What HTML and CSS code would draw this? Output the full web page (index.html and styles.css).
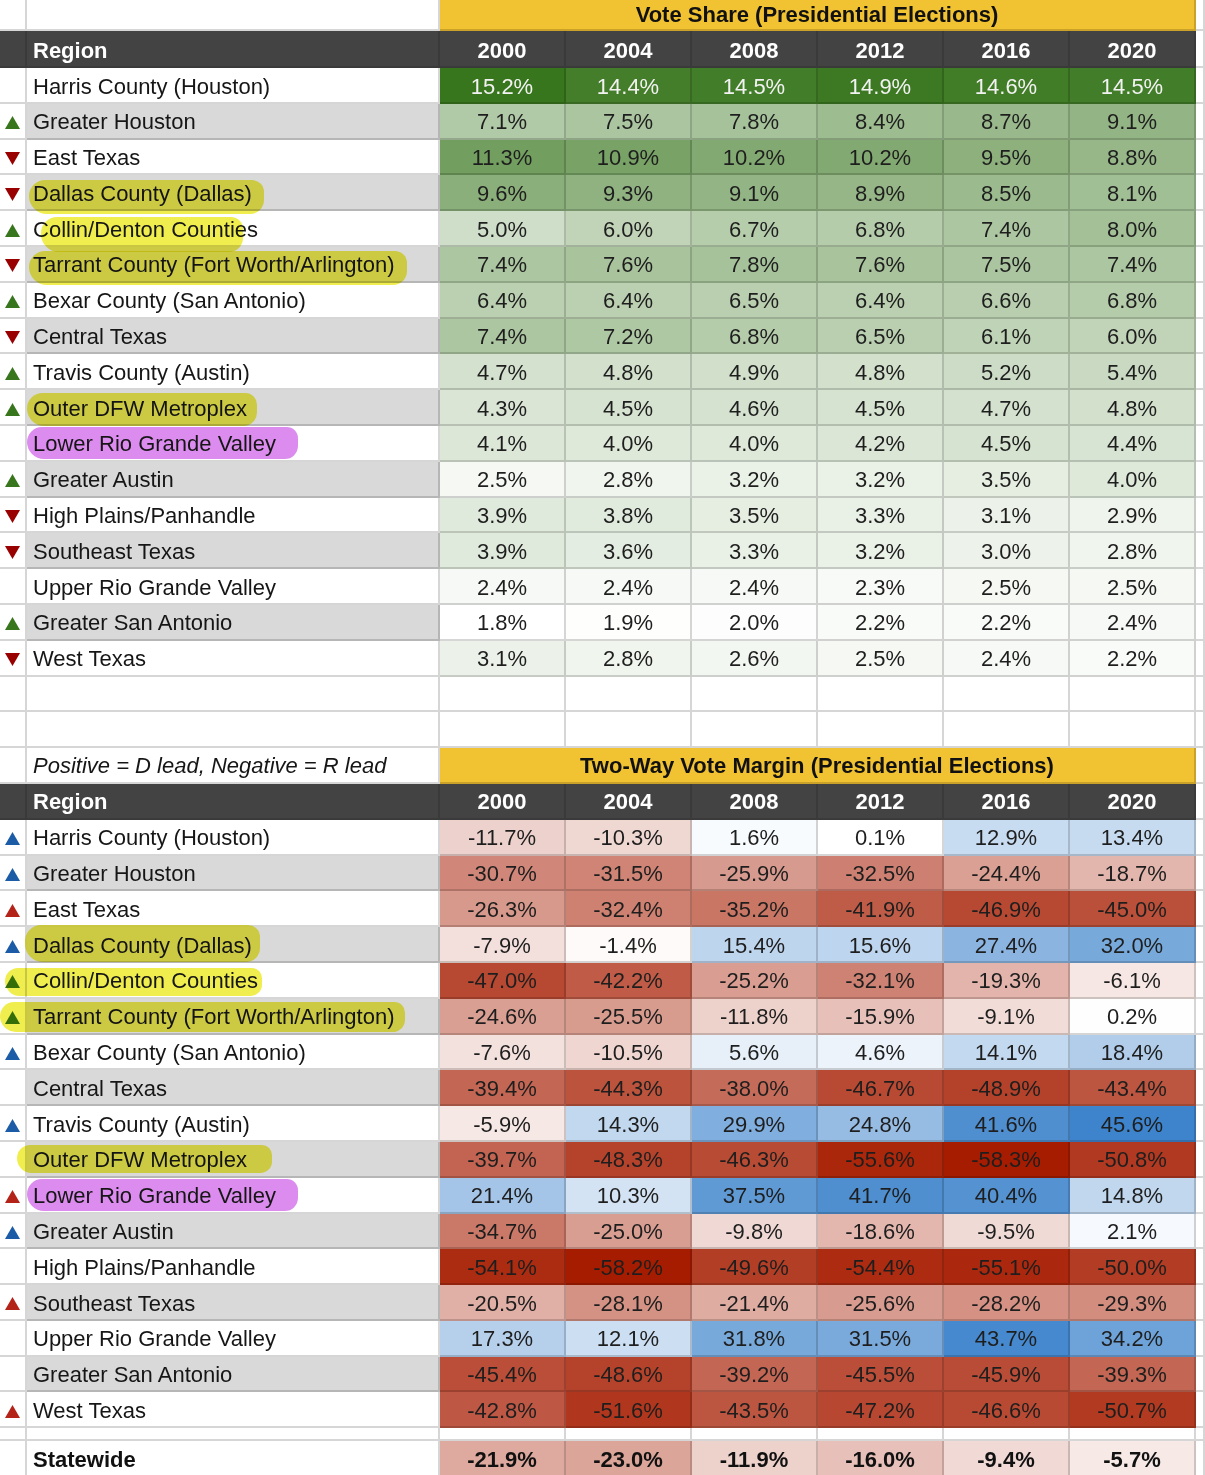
FILE: index.html
```html
<!DOCTYPE html>
<html lang="en">
<head>
<meta charset="utf-8">
<title>Texas Regions</title>
<link rel="stylesheet" href="styles.css">
</head>
<body>
<div class="sheet">
  <div class="row t"><div class="c"></div><div class="c"></div><div class="c title">Vote Share (Presidential Elections)</div><div class="c"></div></div>
  <div class="row h"><div class="c hd"></div><div class="c hd reg">Region</div><div class="c hd">2000</div><div class="c hd">2004</div><div class="c hd">2008</div><div class="c hd">2012</div><div class="c hd">2016</div><div class="c hd">2020</div><div class="c"></div></div>

  <section class="vs">
    <div class="row"><div class="c a"></div><div class="c reg">Harris County (Houston)</div><div class="c n">15.2%</div><div class="c n">14.4%</div><div class="c n">14.5%</div><div class="c n">14.9%</div><div class="c n">14.6%</div><div class="c n">14.5%</div><div class="c"></div></div>
    <div class="row"><div class="c a"><svg class="tri g" viewBox="0 0 15 13"><path d="M7.5 0 15 13H0z"/></svg></div><div class="c reg gray">Greater Houston</div><div class="c n">7.1%</div><div class="c n">7.5%</div><div class="c n">7.8%</div><div class="c n">8.4%</div><div class="c n">8.7%</div><div class="c n">9.1%</div><div class="c"></div></div>
    <div class="row"><div class="c a"><svg class="tri dr" viewBox="0 0 15 13"><path d="M0 0h15L7.5 13z"/></svg></div><div class="c reg">East Texas</div><div class="c n">11.3%</div><div class="c n">10.9%</div><div class="c n">10.2%</div><div class="c n">10.2%</div><div class="c n">9.5%</div><div class="c n">8.8%</div><div class="c"></div></div>
    <div class="row"><div class="c a"><svg class="tri dr" viewBox="0 0 15 13"><path d="M0 0h15L7.5 13z"/></svg></div><div class="c reg gray"><span class="hl top">Dallas County (Dallas)</span></div><div class="c n">9.6%</div><div class="c n">9.3%</div><div class="c n">9.1%</div><div class="c n">8.9%</div><div class="c n">8.5%</div><div class="c n">8.1%</div><div class="c"></div></div>
    <div class="row"><div class="c a"><svg class="tri g" viewBox="0 0 15 13"><path d="M7.5 0 15 13H0z"/></svg></div><div class="c reg">C<span class="hl part">ollin/Denton Counti</span>es</div><div class="c n">5.0%</div><div class="c n">6.0%</div><div class="c n">6.7%</div><div class="c n">6.8%</div><div class="c n">7.4%</div><div class="c n">8.0%</div><div class="c"></div></div>
    <div class="row"><div class="c a"><svg class="tri dr" viewBox="0 0 15 13"><path d="M0 0h15L7.5 13z"/></svg></div><div class="c reg gray"><span class="hl top">Tarrant County (Fort Worth/Arlington)</span></div><div class="c n">7.4%</div><div class="c n">7.6%</div><div class="c n">7.8%</div><div class="c n">7.6%</div><div class="c n">7.5%</div><div class="c n">7.4%</div><div class="c"></div></div>
    <div class="row"><div class="c a"><svg class="tri g" viewBox="0 0 15 13"><path d="M7.5 0 15 13H0z"/></svg></div><div class="c reg">Bexar County (San Antonio)</div><div class="c n">6.4%</div><div class="c n">6.4%</div><div class="c n">6.5%</div><div class="c n">6.4%</div><div class="c n">6.6%</div><div class="c n">6.8%</div><div class="c"></div></div>
    <div class="row"><div class="c a"><svg class="tri dr" viewBox="0 0 15 13"><path d="M0 0h15L7.5 13z"/></svg></div><div class="c reg gray">Central Texas</div><div class="c n">7.4%</div><div class="c n">7.2%</div><div class="c n">6.8%</div><div class="c n">6.5%</div><div class="c n">6.1%</div><div class="c n">6.0%</div><div class="c"></div></div>
    <div class="row"><div class="c a"><svg class="tri g" viewBox="0 0 15 13"><path d="M7.5 0 15 13H0z"/></svg></div><div class="c reg">Travis County (Austin)</div><div class="c n">4.7%</div><div class="c n">4.8%</div><div class="c n">4.9%</div><div class="c n">4.8%</div><div class="c n">5.2%</div><div class="c n">5.4%</div><div class="c"></div></div>
    <div class="row"><div class="c a"><svg class="tri g" viewBox="0 0 15 13"><path d="M7.5 0 15 13H0z"/></svg></div><div class="c reg gray"><span class="hl">Outer DFW Metroplex</span></div><div class="c n">4.3%</div><div class="c n">4.5%</div><div class="c n">4.6%</div><div class="c n">4.5%</div><div class="c n">4.7%</div><div class="c n">4.8%</div><div class="c"></div></div>
    <div class="row"><div class="c a"></div><div class="c reg"><span class="hp">Lower Rio Grande Valley</span></div><div class="c n">4.1%</div><div class="c n">4.0%</div><div class="c n">4.0%</div><div class="c n">4.2%</div><div class="c n">4.5%</div><div class="c n">4.4%</div><div class="c"></div></div>
    <div class="row"><div class="c a"><svg class="tri g" viewBox="0 0 15 13"><path d="M7.5 0 15 13H0z"/></svg></div><div class="c reg gray">Greater Austin</div><div class="c n">2.5%</div><div class="c n">2.8%</div><div class="c n">3.2%</div><div class="c n">3.2%</div><div class="c n">3.5%</div><div class="c n">4.0%</div><div class="c"></div></div>
    <div class="row"><div class="c a"><svg class="tri dr" viewBox="0 0 15 13"><path d="M0 0h15L7.5 13z"/></svg></div><div class="c reg">High Plains/Panhandle</div><div class="c n">3.9%</div><div class="c n">3.8%</div><div class="c n">3.5%</div><div class="c n">3.3%</div><div class="c n">3.1%</div><div class="c n">2.9%</div><div class="c"></div></div>
    <div class="row"><div class="c a"><svg class="tri dr" viewBox="0 0 15 13"><path d="M0 0h15L7.5 13z"/></svg></div><div class="c reg gray">Southeast Texas</div><div class="c n">3.9%</div><div class="c n">3.6%</div><div class="c n">3.3%</div><div class="c n">3.2%</div><div class="c n">3.0%</div><div class="c n">2.8%</div><div class="c"></div></div>
    <div class="row"><div class="c a"></div><div class="c reg">Upper Rio Grande Valley</div><div class="c n">2.4%</div><div class="c n">2.4%</div><div class="c n">2.4%</div><div class="c n">2.3%</div><div class="c n">2.5%</div><div class="c n">2.5%</div><div class="c"></div></div>
    <div class="row"><div class="c a"><svg class="tri g" viewBox="0 0 15 13"><path d="M7.5 0 15 13H0z"/></svg></div><div class="c reg gray">Greater San Antonio</div><div class="c n">1.8%</div><div class="c n">1.9%</div><div class="c n">2.0%</div><div class="c n">2.2%</div><div class="c n">2.2%</div><div class="c n">2.4%</div><div class="c"></div></div>
    <div class="row"><div class="c a"><svg class="tri dr" viewBox="0 0 15 13"><path d="M0 0h15L7.5 13z"/></svg></div><div class="c reg">West Texas</div><div class="c n">3.1%</div><div class="c n">2.8%</div><div class="c n">2.6%</div><div class="c n">2.5%</div><div class="c n">2.4%</div><div class="c n">2.2%</div><div class="c"></div></div>
  </section>

  <div class="row"><div class="c a"></div><div class="c reg"></div><div class="c"></div><div class="c"></div><div class="c"></div><div class="c"></div><div class="c"></div><div class="c"></div><div class="c"></div></div>
  <div class="row"><div class="c a"></div><div class="c reg"></div><div class="c"></div><div class="c"></div><div class="c"></div><div class="c"></div><div class="c"></div><div class="c"></div><div class="c"></div></div>

  <div class="row m"><div class="c a"></div><div class="c reg note">Positive = D lead, Negative = R lead</div><div class="c title">Two-Way Vote Margin (Presidential Elections)</div><div class="c"></div></div>
  <div class="row hb"><div class="c hd"></div><div class="c hd reg">Region</div><div class="c hd">2000</div><div class="c hd">2004</div><div class="c hd">2008</div><div class="c hd">2012</div><div class="c hd">2016</div><div class="c hd">2020</div><div class="c"></div></div>

  <section class="mg">
    <div class="row"><div class="c a"><svg class="tri bl" viewBox="0 0 15 13"><path d="M7.5 0 15 13H0z"/></svg></div><div class="c reg">Harris County (Houston)</div><div class="c n">-11.7%</div><div class="c n">-10.3%</div><div class="c n">1.6%</div><div class="c n">0.1%</div><div class="c n">12.9%</div><div class="c n">13.4%</div><div class="c"></div></div>
    <div class="row"><div class="c a"><svg class="tri bl" viewBox="0 0 15 13"><path d="M7.5 0 15 13H0z"/></svg></div><div class="c reg gray">Greater Houston</div><div class="c n">-30.7%</div><div class="c n">-31.5%</div><div class="c n">-25.9%</div><div class="c n">-32.5%</div><div class="c n">-24.4%</div><div class="c n">-18.7%</div><div class="c"></div></div>
    <div class="row"><div class="c a"><svg class="tri rd" viewBox="0 0 15 13"><path d="M7.5 0 15 13H0z"/></svg></div><div class="c reg">East Texas</div><div class="c n">-26.3%</div><div class="c n">-32.4%</div><div class="c n">-35.2%</div><div class="c n">-41.9%</div><div class="c n">-46.9%</div><div class="c n">-45.0%</div><div class="c"></div></div>
    <div class="row"><div class="c a"><svg class="tri bl" viewBox="0 0 15 13"><path d="M7.5 0 15 13H0z"/></svg></div><div class="c reg gray"><span class="hl b-dal">Dallas County (Dallas)</span></div><div class="c n">-7.9%</div><div class="c n">-1.4%</div><div class="c n">15.4%</div><div class="c n">15.6%</div><div class="c n">27.4%</div><div class="c n">32.0%</div><div class="c"></div></div>
    <div class="row"><div class="c a"><svg class="tri g" viewBox="0 0 15 13"><path d="M7.5 0 15 13H0z"/></svg></div><div class="c reg"><span class="hl b-col">Collin/Denton Counties</span></div><div class="c n">-47.0%</div><div class="c n">-42.2%</div><div class="c n">-25.2%</div><div class="c n">-32.1%</div><div class="c n">-19.3%</div><div class="c n">-6.1%</div><div class="c"></div></div>
    <div class="row"><div class="c a"><svg class="tri g" viewBox="0 0 15 13"><path d="M7.5 0 15 13H0z"/></svg></div><div class="c reg gray"><span class="hl b-tar">Tarrant County (Fort Worth/Arlington)</span></div><div class="c n">-24.6%</div><div class="c n">-25.5%</div><div class="c n">-11.8%</div><div class="c n">-15.9%</div><div class="c n">-9.1%</div><div class="c n">0.2%</div><div class="c"></div></div>
    <div class="row"><div class="c a"><svg class="tri bl" viewBox="0 0 15 13"><path d="M7.5 0 15 13H0z"/></svg></div><div class="c reg">Bexar County (San Antonio)</div><div class="c n">-7.6%</div><div class="c n">-10.5%</div><div class="c n">5.6%</div><div class="c n">4.6%</div><div class="c n">14.1%</div><div class="c n">18.4%</div><div class="c"></div></div>
    <div class="row"><div class="c a"></div><div class="c reg gray">Central Texas</div><div class="c n">-39.4%</div><div class="c n">-44.3%</div><div class="c n">-38.0%</div><div class="c n">-46.7%</div><div class="c n">-48.9%</div><div class="c n">-43.4%</div><div class="c"></div></div>
    <div class="row"><div class="c a"><svg class="tri bl" viewBox="0 0 15 13"><path d="M7.5 0 15 13H0z"/></svg></div><div class="c reg">Travis County (Austin)</div><div class="c n">-5.9%</div><div class="c n">14.3%</div><div class="c n">29.9%</div><div class="c n">24.8%</div><div class="c n">41.6%</div><div class="c n">45.6%</div><div class="c"></div></div>
    <div class="row"><div class="c a"></div><div class="c reg gray"><span class="hl b-dfw">Outer DFW Metroplex</span></div><div class="c n">-39.7%</div><div class="c n">-48.3%</div><div class="c n">-46.3%</div><div class="c n">-55.6%</div><div class="c n">-58.3%</div><div class="c n">-50.8%</div><div class="c"></div></div>
    <div class="row"><div class="c a"><svg class="tri rd" viewBox="0 0 15 13"><path d="M7.5 0 15 13H0z"/></svg></div><div class="c reg"><span class="hp">Lower Rio Grande Valley</span></div><div class="c n">21.4%</div><div class="c n">10.3%</div><div class="c n">37.5%</div><div class="c n">41.7%</div><div class="c n">40.4%</div><div class="c n">14.8%</div><div class="c"></div></div>
    <div class="row"><div class="c a"><svg class="tri bl" viewBox="0 0 15 13"><path d="M7.5 0 15 13H0z"/></svg></div><div class="c reg gray">Greater Austin</div><div class="c n">-34.7%</div><div class="c n">-25.0%</div><div class="c n">-9.8%</div><div class="c n">-18.6%</div><div class="c n">-9.5%</div><div class="c n">2.1%</div><div class="c"></div></div>
    <div class="row"><div class="c a"></div><div class="c reg">High Plains/Panhandle</div><div class="c n">-54.1%</div><div class="c n">-58.2%</div><div class="c n">-49.6%</div><div class="c n">-54.4%</div><div class="c n">-55.1%</div><div class="c n">-50.0%</div><div class="c"></div></div>
    <div class="row"><div class="c a"><svg class="tri rd" viewBox="0 0 15 13"><path d="M7.5 0 15 13H0z"/></svg></div><div class="c reg gray">Southeast Texas</div><div class="c n">-20.5%</div><div class="c n">-28.1%</div><div class="c n">-21.4%</div><div class="c n">-25.6%</div><div class="c n">-28.2%</div><div class="c n">-29.3%</div><div class="c"></div></div>
    <div class="row"><div class="c a"></div><div class="c reg">Upper Rio Grande Valley</div><div class="c n">17.3%</div><div class="c n">12.1%</div><div class="c n">31.8%</div><div class="c n">31.5%</div><div class="c n">43.7%</div><div class="c n">34.2%</div><div class="c"></div></div>
    <div class="row"><div class="c a"></div><div class="c reg gray">Greater San Antonio</div><div class="c n">-45.4%</div><div class="c n">-48.6%</div><div class="c n">-39.2%</div><div class="c n">-45.5%</div><div class="c n">-45.9%</div><div class="c n">-39.3%</div><div class="c"></div></div>
    <div class="row"><div class="c a"><svg class="tri rd" viewBox="0 0 15 13"><path d="M7.5 0 15 13H0z"/></svg></div><div class="c reg">West Texas</div><div class="c n">-42.8%</div><div class="c n">-51.6%</div><div class="c n">-43.5%</div><div class="c n">-47.2%</div><div class="c n">-46.6%</div><div class="c n">-50.7%</div><div class="c"></div></div>
    <div class="row sp"><div class="c a"></div><div class="c reg"></div><div class="c"></div><div class="c"></div><div class="c"></div><div class="c"></div><div class="c"></div><div class="c"></div><div class="c"></div></div>
    <div class="row bold"><div class="c a"></div><div class="c reg">Statewide</div><div class="c n">-21.9%</div><div class="c n">-23.0%</div><div class="c n">-11.9%</div><div class="c n">-16.0%</div><div class="c n">-9.4%</div><div class="c n">-5.7%</div><div class="c"></div></div>
  </section>
</div>
<script src="script.js"></script>
</body>
</html>
```

FILE: styles.css
```css
* {
  box-sizing: border-box;
  margin: 0;
  padding: 0;
}

html, body {
  background: #ffffff;
}

body {
  width: 1205px;
  height: 1475px;
  overflow: hidden;
  font-family: "Liberation Sans", Arial, sans-serif;
  font-size: 22px;
  color: #161616;
}

.sheet {
  display: flex;
  flex-direction: column;
}

.row {
  display: grid;
  grid-template-columns: 27px 413px repeat(6, 126px) 9px;
  grid-template-rows: 100%;
  height: 35.8px;
  flex: none;
}

.row.t { height: 31px; }
.row.h { height: 37px; }
.row.sp { height: 13px; }

.c {
  display: block;
  line-height: 25px;
  padding-top: 5.5px;
  text-align: center;
  white-space: nowrap;
  border-right: 2px solid rgba(0, 0, 0, 0.16);
  border-bottom: 2px solid rgba(0, 0, 0, 0.16);
  min-width: 0;
  min-height: 0;
}

.row.t .c { padding-top: 2px; }
.row.h .c { padding-top: 6.5px; }
.row.m .c { padding-top: 5px; }
.row.hb .c { padding-top: 5.5px; }

.c.reg {
  text-align: left;
  padding-left: 6px;
}

.c.a {
  display: flex;
  align-items: center;
  justify-content: center;
  padding: 4px 0 0 0;
}

.gray { background: #d9d9d9; }

.title {
  grid-column: 3 / 9;
  background: #f1c232;
  font-weight: bold;
  color: #111;
}

.hd {
  background: #434343;
  color: #ffffff;
  font-weight: bold;
  border-color: rgba(0, 0, 0, 0.12);
}

.note {
  font-style: italic;
}

.n { color: #1e1e1e; }
.n.light { color: #f2f2f2; }

.bold .c { font-weight: bold; color: #111; }

.tri {
  width: 15px;
  height: 13px;
  display: block;
}
.tri.g { fill: #38761d; }
.tri.dr { fill: #990000; }
.tri.bl { fill: #1c5ca6; }
.tri.rd { fill: #b42318; }

/* highlighter marks */
.hl, .hp {
  mix-blend-mode: multiply;
  border-radius: 16px 12px 14px 18px;
  padding: 3px 10px 5px 6px;
  margin-left: -6px;
}
.hl { background: rgb(240, 238, 78); }
.hp { background: rgb(220, 140, 238); padding: 4px 22px 3px 6px; }

.hl.top { padding: 1px 12px 8px 4px; margin-left: -4px; }
.hl.part { padding: 0 8px 10px 8px; margin-left: -8px; margin-right: -8px; }

.hl.b-dal { padding: 8px 8px 4px 8px; margin-left: -8px; }
.hl.b-col { padding: 0 4px 3px 28px; margin-left: -28px; }
.hl.b-tar { padding: 2px 10px 3px 33px; margin-left: -33px; }
.hl.b-dfw { padding: 2px 25px 1px 16px; margin-left: -16px; }
```

FILE: script.js
```js
(function () {
  function mix(c, t) {
    t = Math.max(0, Math.min(1, t));
    return 'rgb(' + c.map(function (v) { return Math.round(255 - t * (255 - v)); }).join(',') + ')';
  }
  var green = [56, 118, 29];
  var red = [166, 28, 0];
  var blue = [62, 132, 204];

  document.querySelectorAll('.vs .n').forEach(function (el) {
    var v = parseFloat(el.textContent);
    var t = (v - 1.8) / (15.2 - 1.8);
    el.style.background = mix(green, t);
    if (t > 0.85) el.classList.add('light');
  });

  document.querySelectorAll('.mg .n').forEach(function (el) {
    var v = parseFloat(el.textContent);
    el.style.background = v < 0 ? mix(red, v / -58.3) : mix(blue, v / 45.6);
  });
})();
```
